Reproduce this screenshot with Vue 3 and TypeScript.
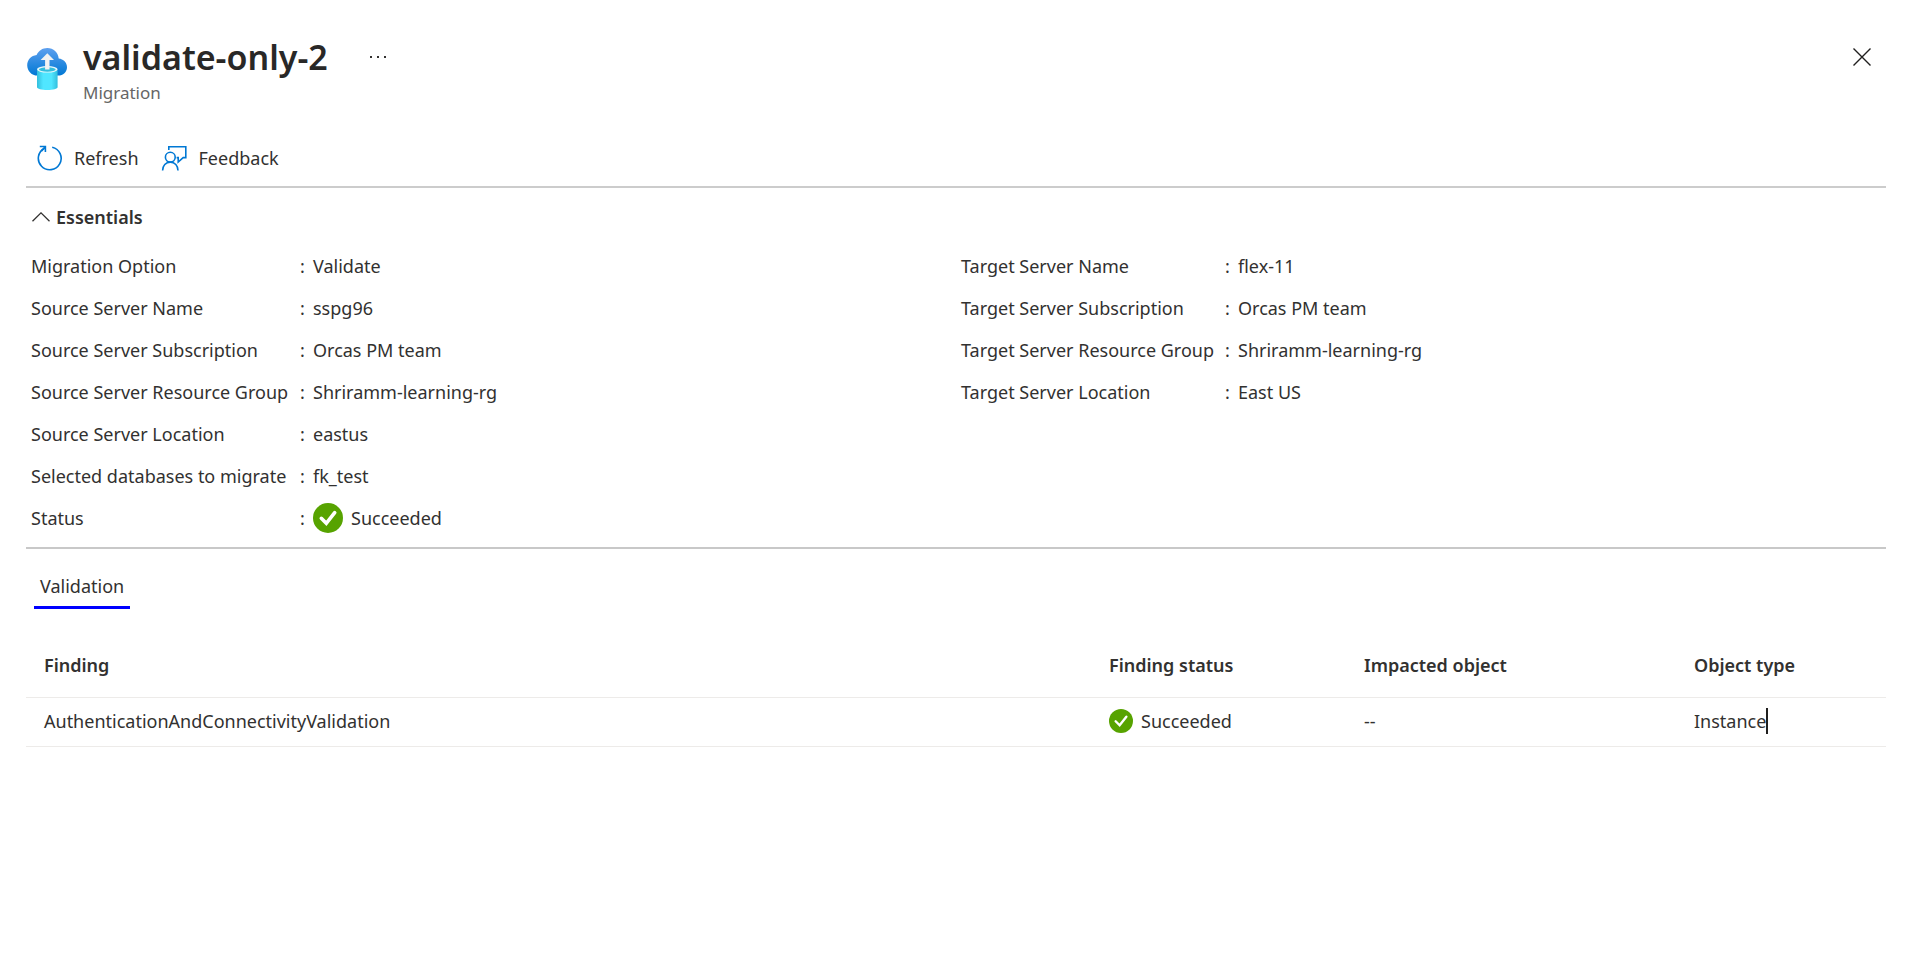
<script setup lang="ts">
import { ref } from 'vue'

interface Property {
  label: string
  value: string
  ok?: boolean
}

interface Finding {
  name: string
  status: string
  impacted: string
  type: string
}

const source: Property[] = [
  { label: 'Migration Option', value: 'Validate' },
  { label: 'Source Server Name', value: 'sspg96' },
  { label: 'Source Server Subscription', value: 'Orcas PM team' },
  { label: 'Source Server Resource Group', value: 'Shriramm-learning-rg' },
  { label: 'Source Server Location', value: 'eastus' },
  { label: 'Selected databases to migrate', value: 'fk_test' },
  { label: 'Status', value: 'Succeeded', ok: true },
]

const target: Property[] = [
  { label: 'Target Server Name', value: 'flex-11' },
  { label: 'Target Server Subscription', value: 'Orcas PM team' },
  { label: 'Target Server Resource Group', value: 'Shriramm-learning-rg' },
  { label: 'Target Server Location', value: 'East US' },
]

const groups = [
  { id: 'source', items: source },
  { id: 'target', items: target },
]

const findings: Finding[] = [
  { name: 'AuthenticationAndConnectivityValidation', status: 'Succeeded', impacted: '--', type: 'Instance' },
]

const expanded = ref(true)
</script>

<template>
  <main class="blade">
    <header class="header">
      <svg class="logo" viewBox="0 0 40 42" aria-hidden="true">
        <defs>
          <linearGradient id="cloud" x1="0" y1="0" x2="0" y2="1">
            <stop offset="0" stop-color="#5ea0ef" />
            <stop offset="1" stop-color="#0078d4" />
          </linearGradient>
          <linearGradient id="tube" x1="0" y1="0" x2="1" y2="0">
            <stop offset="0" stop-color="#32bedd" />
            <stop offset="0.3" stop-color="#50e6ff" />
            <stop offset="0.7" stop-color="#50e6ff" />
            <stop offset="1" stop-color="#32bedd" />
          </linearGradient>
        </defs>
        <path
          fill="url(#cloud)"
          d="M40 19.2c0-4.700-3.600-8.300-8.300-8.800C31.200 4.500 26.500 0 20.300 0c-4.800 0-8.900 2.800-10.700 7C4.200 7.600.2 12 .2 17.200c0 5.800 4.500 10.400 10.300 10.400h20.700c4.900 0 8.800-3.700 8.800-8.400z"
        />
        <path fill="url(#tube)" d="M10 21.200v18c0 1.600 4.600 2.800 10.300 2.800s10.300-1.200 10.300-2.800v-18z" />
        <ellipse cx="20.300" cy="21.300" rx="10.300" ry="3.300" fill="#e8f6fa" />
        <ellipse cx="20.300" cy="21.500" rx="8.400" ry="2.200" fill="#32bedd" />
        <path fill="#f2f2f2" d="M20.300 5.200l6.700 6.800h-4.500v9.600h-4.400V12h-4.500z" />
      </svg>
      <div class="heading">
        <div class="title-row">
          <h1>validate-only-2</h1>
          <button class="icon-button" type="button" aria-label="More actions">
            <svg class="dots" viewBox="0 0 18 4" aria-hidden="true">
              <path fill="#323130" d="M1 1h2v2H1zM8 1h2v2H8zM15 1h2v2h-2z" />
            </svg>
          </button>
        </div>
        <p class="subtitle">Migration</p>
      </div>
      <button class="icon-button close" type="button" aria-label="Close">
        <svg class="cross" viewBox="0 0 18 18" aria-hidden="true">
          <path d="M.5.5l17 17M17.500.5l-17 17" fill="none" stroke="#201f1e" stroke-width="1.400" />
        </svg>
      </button>
    </header>

    <div class="toolbar">
      <button type="button">
        <svg class="tool" viewBox="0 0 26 26" aria-hidden="true">
          <g fill="none" stroke="#0078d4" stroke-width="1.600">
            <path d="M16.200 2.200A11.400 11.400 0 1 1 8.500 3.200" />
            <path d="M3.800 1.500h5.600v5.600M9.400 1.500L5.600 6" />
          </g>
        </svg>
        <span>Refresh</span>
      </button>
      <button type="button">
        <svg class="tool" viewBox="0 0 26 26" aria-hidden="true">
          <g fill="none" stroke="#0078d4" stroke-width="1.600">
            <path d="M7.800 5V1.800h17v10.800h-2.600l-5 4.400v-4.400h-1.600" />
            <circle cx="9.300" cy="12.200" r="4.900" />
            <path d="M1.600 25.500c0-4.800 3.200-8.400 7.700-8.400s7.700 3.600 7.700 8.400" />
          </g>
        </svg>
        <span>Feedback</span>
      </button>
    </div>

    <section class="essentials">
      <button class="toggle" type="button" :aria-expanded="expanded" @click="expanded = !expanded">
        <svg class="chevron" viewBox="0 0 18 10" aria-hidden="true">
          <path d="M.5 9.300L9 .9l8.500 8.400" fill="none" stroke="#323130" stroke-width="1.300" />
        </svg>
        <span>Essentials</span>
      </button>
      <div v-if="expanded" class="properties">
        <dl v-for="group in groups" :key="group.id" :class="group.id">
          <div v-for="item in group.items" :key="item.label" class="property">
            <dt>{{ item.label }}</dt>
            <dd>
              <span class="colon">:</span>
              <svg v-if="item.ok" class="status-large" viewBox="0 0 30 30" aria-hidden="true">
                <circle cx="15" cy="15" r="15" fill="#57a300" />
                <path d="M8.300 15.300l5 5 8.400-10.700" fill="none" stroke="#fff" stroke-width="3.600" stroke-linecap="round" />
              </svg>
              <span>{{ item.value }}</span>
            </dd>
          </div>
        </dl>
      </div>
    </section>

    <div class="tabs" role="tablist">
      <button class="tab" type="button" role="tab" aria-selected="true">Validation</button>
    </div>

    <table class="findings">
      <thead>
        <tr>
          <th scope="col">Finding</th>
          <th scope="col" class="col-status">Finding status</th>
          <th scope="col" class="col-impacted">Impacted object</th>
          <th scope="col" class="col-type">Object type</th>
        </tr>
      </thead>
      <tbody>
        <tr v-for="finding in findings" :key="finding.name">
          <td>{{ finding.name }}</td>
          <td>
            <div class="cell">
              <svg class="status-small" viewBox="0 0 30 30" aria-hidden="true">
                <circle cx="15" cy="15" r="15" fill="#57a300" />
                <path d="M8.300 15.300l5 5 8.400-10.700" fill="none" stroke="#fff" stroke-width="3" stroke-linecap="round" />
              </svg>
              <span>{{ finding.status }}</span>
            </div>
          </td>
          <td>{{ finding.impacted }}</td>
          <td>
            <div class="cell type"><span>{{ finding.type }}</span><i class="caret"></i></div>
          </td>
        </tr>
      </tbody>
    </table>
  </main>
</template>

<style>
body {
  margin: 0;
  background: #fff;
}
</style>

<style scoped>
.blade {
  box-sizing: border-box;
  min-height: 100vh;
  padding: 32px 27px 32px 26px;
  background: #fff;
  color: #323130;
  font-family: "Segoe UI", "Noto Sans", "Open Sans", sans-serif;
  font-size: 18px;
  line-height: 26px;
}

button {
  padding: 0;
  border: 0;
  background: none;
  color: inherit;
  font: inherit;
  cursor: pointer;
}

svg {
  display: block;
  flex: none;
}

.header {
  display: flex;
  align-items: flex-start;
}

.logo {
  width: 40px;
  height: 42px;
  margin: 16px 16px 0 1px;
}

.heading {
  flex: 1;
}

.title-row {
  display: flex;
  align-items: center;
  gap: 30px;
}

h1 {
  margin: 0;
  color: #292827;
  font-size: 34px;
  font-weight: 600;
  line-height: 48px;
}

.icon-button {
  display: grid;
  place-items: center;
  width: 40px;
  height: 50px;
}

.dots {
  width: 18px;
  height: 4px;
}

.close {
  width: 48px;
}

.cross {
  width: 18px;
  height: 18px;
}

.subtitle {
  margin: 0;
  color: #666;
  font-size: 17px;
  line-height: 22px;
}

.toolbar {
  display: flex;
  gap: 22px;
  padding: 41px 0 15px 10px;
  border-bottom: 2px solid #ccc;
}

.toolbar button {
  display: flex;
  align-items: center;
  gap: 12px;
}

.tool {
  width: 26px;
  height: 26px;
}

.essentials {
  padding: 16px 0 8px;
  border-bottom: 2px solid #c8c8c8;
}

.toggle {
  display: flex;
  align-items: center;
  gap: 6px;
  margin-left: 6px;
  font-weight: 600;
}

.chevron {
  width: 18px;
  height: 10px;
}

.properties {
  display: grid;
  grid-template-columns: 1fr 1fr;
  padding-top: 15px;
}

dl {
  margin: 0;
  padding-left: 5px;
}

.property {
  display: grid;
  grid-template-columns: 269px 1fr;
  align-items: center;
  height: 42px;
}

.target .property {
  grid-template-columns: 264px 1fr;
}

dt {
  white-space: nowrap;
}

dd {
  display: flex;
  align-items: center;
  margin: 0;
}

.colon {
  width: 13px;
}

.status-large {
  width: 30px;
  height: 30px;
  margin-right: 8px;
}

.tabs {
  display: flex;
  padding: 20px 0 0 8px;
}

.tab {
  padding: 4px 6px 7px;
  border-bottom: 3px solid #00f;
}

.findings {
  width: 100%;
  margin-top: 34px;
  border-collapse: collapse;
  table-layout: fixed;
  text-align: left;
}

th,
td {
  box-sizing: border-box;
  padding: 0 0 0 18px;
  border-bottom: 1px solid #edebe9;
}

th {
  height: 54px;
  padding-bottom: 9px;
  font-weight: 600;
}

td {
  height: 49px;
  padding-bottom: 2px;
}

.col-status {
  width: 255px;
}

.col-impacted {
  width: 330px;
}

.col-type {
  width: 210px;
}

.cell {
  display: flex;
  align-items: center;
  gap: 8px;
}

.type {
  gap: 0;
}

.status-small {
  width: 24px;
  height: 24px;
}

.caret {
  width: 2px;
  height: 26px;
  background: #201f1e;
}
</style>
